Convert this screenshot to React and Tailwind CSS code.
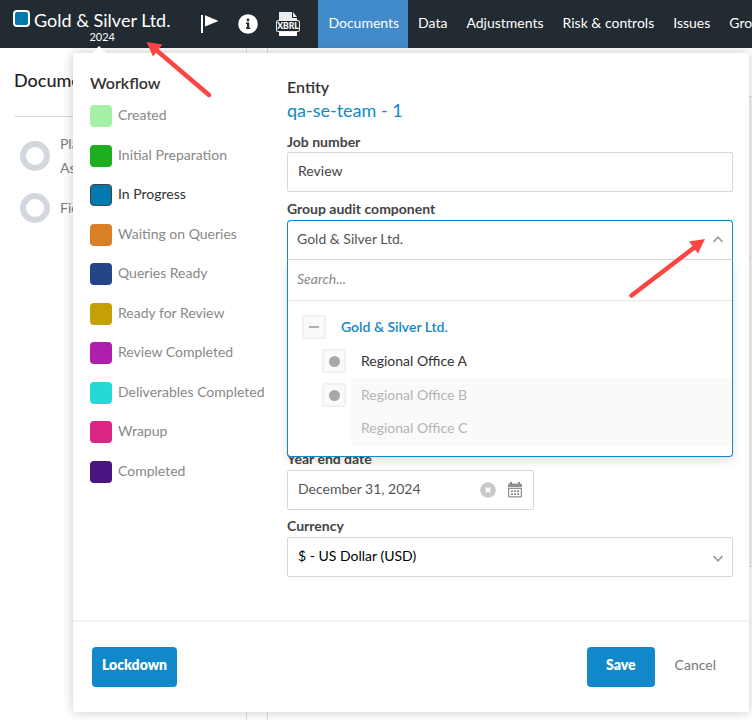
import React, { useState } from 'react';

const tabs = ['Documents', 'Data', 'Adjustments', 'Risk & controls', 'Issues', 'Group audit'];

const stages = [
  { name: 'Created', color: 'bg-[#a6f0a6]' },
  { name: 'Initial Preparation', color: 'bg-[#1fae1f]' },
  { name: 'In Progress', color: 'bg-[#0079ae]' },
  { name: 'Waiting on Queries', color: 'bg-[#d98026]' },
  { name: 'Queries Ready', color: 'bg-[#244587]' },
  { name: 'Ready for Review', color: 'bg-[#c4a006]' },
  { name: 'Review Completed', color: 'bg-[#ae1fae]' },
  { name: 'Deliverables Completed', color: 'bg-[#26d9d9]' },
  { name: 'Wrapup', color: 'bg-[#d92680]' },
  { name: 'Completed', color: 'bg-[#4b1580]' },
];

const FlagIcon = () => (
  <svg width="20" height="20" viewBox="0 0 20 20" fill="#fff" aria-hidden="true">
    <rect x="1" y="1" width="2" height="18" />
    <path d="M5 1.2 18.5 7 5 12.6z" />
  </svg>
);

const InfoIcon = () => (
  <svg width="20" height="20" viewBox="0 0 20 20" aria-hidden="true">
    <circle cx="10" cy="10" r="9.8" fill="#fff" />
    <circle cx="10" cy="6" r="1.4" fill="#222a32" />
    <path d="M8 8.6h3.2v5h1v1.4H8v-1.4h1V10H8z" fill="#222a32" />
  </svg>
);

const XbrlIcon = () => (
  <svg width="24" height="24" viewBox="0 0 24 24" aria-hidden="true">
    <path d="M3 0h13v6h5v2H3z" fill="#e9ebec" />
    <path d="M17 0l4 5h-4z" fill="#e9ebec" />
    <rect x="0" y="8" width="24" height="12" rx="2.5" fill="#e9ebec" />
    <rect x="1" y="9" width="22" height="10" rx="1.5" fill="#222a32" />
    <rect x="3" y="20" width="18" height="4" fill="#fff" />
    <text x="12" y="17" textAnchor="middle" fontSize="8.6" fontWeight="900" fill="#fff" fontFamily="Lato, sans-serif">
      XBRL
    </text>
  </svg>
);

const Chevron = ({ up = false }) => (
  <svg width="10" height="7" viewBox="0 0 10 7" fill="none" stroke="#999" strokeWidth="1.6" aria-hidden="true">
    <path d={up ? 'M0.5 6 5 1.2 9.5 6' : 'M0.5 1 5 5.8 9.5 1'} />
  </svg>
);

const ClearIcon = () => (
  <svg width="16" height="16" viewBox="0 0 16 16" aria-hidden="true">
    <circle cx="8" cy="8" r="7.8" fill="#c9c9c9" />
    <path d="M5.6 5.6l4.8 4.8M10.4 5.6l-4.8 4.8" stroke="#fff" strokeWidth="1.8" />
  </svg>
);

const CalendarIcon = () => (
  <svg width="14" height="16" viewBox="0 0 14 16" fill="#8f8f8f" aria-hidden="true">
    <path d="M0 3q0-1.500 1.500-1.500H2V0h2v1.500h6V0h2v1.500h.5Q14 1.500 14 3v2H0z" />
    <path d="M0 5.800h14V14q0 1.500-1.500 1.500h-11Q0 15.500 0 14zM1.200 7v7.200h11.600V7z" fillRule="evenodd" />
    <path d="M3 8.200h2v1.700H3zM6 8.200h2v1.700H6zM9 8.200h2v1.700H9zM3 11.200h2v1.700H3zM6 11.200h2v1.700H6zM9 11.200h2v1.700H9z" />
  </svg>
);

const toggleBox = 'flex size-6 shrink-0 items-center justify-center rounded-xs border-2 border-[#f0f1f2] bg-[#fafafa]';

const Header = () => (
  <header className="flex h-12 shrink-0 overflow-hidden bg-[#222a32] text-white">
    <button className="flex items-start gap-1 pt-[10px] pl-[13px]">
      <span className="size-[17px] rounded-sm border-2 border-white bg-[#0079ae]" />
      <span className="flex flex-col items-center">
        <span className="text-lg leading-[20px] whitespace-nowrap">Gold &amp; Silver Ltd.</span>
        <span className="text-[11px] leading-[14px]">2024</span>
      </span>
    </button>
    <div className="flex items-center pr-[18px] pl-[30px]">
      <button aria-label="Flag"><FlagIcon /></button>
      <button aria-label="Information" className="ml-[18px]"><InfoIcon /></button>
      <button aria-label="XBRL" className="ml-[18px]"><XbrlIcon /></button>
    </div>
    <nav className="flex">
      {tabs.map((tab, i) => (
        <a
          key={tab}
          href="#"
          className={`flex items-center pr-[9px] pb-[2px] pl-[10px] text-sm whitespace-nowrap ${i === 0 ? 'bg-[#428bca]' : ''}`}
        >
          {tab}
        </a>
      ))}
    </nav>
  </header>
);

const Background = () => (
  <div className="flex flex-1">
    <aside className="w-[247px] shrink-0 border-r border-[#ddd] pl-[14px]">
      <h2 className="border-b border-[#ddd] pt-[21px] pb-[25px] text-lg leading-[22px] font-medium text-[#222]">
        Documents
      </h2>
      <ul className="flex flex-col gap-[13px] pt-[15px] pl-[6px] text-sm text-[#777f88]">
        <li className="flex items-center gap-[10px]">
          <span className="size-[30px] shrink-0 rounded-full border-6 border-[#d3d8de]" />
          <span className="w-[100px] leading-6">Planning &amp; Assessment</span>
        </li>
        <li className="flex items-center gap-[10px]">
          <span className="size-[30px] shrink-0 rounded-full border-6 border-[#d3d8de]" />
          <span>Fieldwork</span>
        </li>
      </ul>
    </aside>
    <main className="ml-[20px] flex-1 border-l border-[#ddd]">
      <div className="h-[49px] border-b border-[#ddd]" />
      <div className="h-[161px] border-b border-[#ddd] bg-[#f5f5f5]" />
      <div className="h-[309px] border-b border-[#ddd] bg-[#f5f5f5]" />
    </main>
  </div>
);

const Workflow = ({ current, onChange }) => (
  <section className="w-[197px] shrink-0 pt-[20px]">
    <h3 className="text-base leading-[20px] font-semibold text-[#333]">Workflow</h3>
    <ul className="mt-[12px] flex h-[378px] flex-col justify-between">
      {stages.map(({ name, color }) => (
        <li key={name}>
          <button
            onClick={() => onChange(name)}
            className={`flex h-[22px] items-center gap-[6px] text-sm whitespace-nowrap ${
              name === current ? 'text-[#333]' : 'text-[#888]'
            }`}
          >
            <span className={`size-[22px] rounded-sm ${color} ${name === current ? 'border border-[#444]' : ''}`} />
            <span className="pb-[2px]">{name}</span>
          </button>
        </li>
      ))}
    </ul>
  </section>
);

const ComponentTree = () => (
  <div className="relative z-10 -mb-[7px] rounded-b-sm border border-t-0 border-[#1188c9] bg-white text-sm shadow-[0_4px_10px_rgba(0,0,0,0.12)]">
    <input
      type="text"
      aria-label="Search components"
      placeholder="Search..."
      className="block h-[41px] w-full border-b border-[#e4e6e8] px-[9px] pb-1 outline-none placeholder:text-[#888] placeholder:italic"
    />
    <ul role="tree" className="flex flex-col pt-[9px] pb-[10px] pl-[14px]">
      <li role="treeitem" className="flex h-[34px] items-center">
        <button aria-label="Collapse" className={toggleBox}>
          <span className="h-[2px] w-[10px] bg-[#b0b0b0]" />
        </button>
        <span className="pb-px pl-[15px] font-semibold text-[#1188c9]">Gold &amp; Silver Ltd.</span>
      </li>
      <li role="treeitem" className="flex h-[34px] items-center pl-[20px]">
        <button aria-label="Select Regional Office A" className={toggleBox}>
          <span className="size-[11px] rounded-full bg-[#a8a8a8]" />
        </button>
        <span className="pl-[15px] text-[#333]">Regional Office A</span>
      </li>
      <li role="treeitem" className="flex h-[34px] items-center pl-[20px]">
        <button aria-label="Select Regional Office B" className={toggleBox}>
          <span className="size-[11px] rounded-full bg-[#a8a8a8]" />
        </button>
        <span className="ml-[5px] flex flex-1 items-center self-stretch bg-[#fafafa] pb-px pl-[10px] text-[#b5b5b5]">
          Regional Office B
        </span>
      </li>
      <li role="treeitem" className="flex h-[34px] items-center pl-[49px]">
        <span className="flex flex-1 items-center self-stretch bg-[#fafafa] pb-[2px] pl-[10px] text-[#b5b5b5]">
          Regional Office C
        </span>
      </li>
    </ul>
  </div>
);

const label = 'block text-sm leading-[18px] font-bold text-[#444]';
const field = 'h-10 rounded-xs border border-[#d3d8de] bg-white text-sm';

const EntityForm = () => (
  <section className="min-w-0 flex-1 pt-[24px]">
    <h3 className="text-base leading-[20px] font-semibold text-[#333]">Entity</h3>
    <a href="#" className="block text-lg leading-[26px] text-[#1188c9]">qa-se-team - 1</a>

    <label htmlFor="job" className={`${label} mt-[10px]`}>Job number</label>
    <input id="job" type="text" defaultValue="Review" className={`${field} mt-[1px] block w-full px-[10px] pb-1 text-[#444]`} />

    <label htmlFor="component" className={`${label} mt-[8px]`}>Group audit component</label>
    <button
      id="component"
      aria-expanded="true"
      className="mt-[2px] flex h-10 w-full items-center justify-between rounded-t-sm border border-[#1188c9] border-b-[#dadcde] px-[9px] pb-[2px] text-sm text-[#555]"
    >
      Gold &amp; Silver Ltd.
      <Chevron up />
    </button>
    <ComponentTree />

    <label htmlFor="yearEnd" className={label}>Year end date</label>
    <div className={`${field} mt-[2px] flex w-[247px] items-center pr-[11px] pl-[10px]`}>
      <input id="yearEnd" type="text" defaultValue="December 31, 2024" className="min-w-0 flex-1 pb-[2px] text-[#555] outline-none" />
      <button aria-label="Clear date"><ClearIcon /></button>
      <button aria-label="Open calendar" className="ml-[12px]"><CalendarIcon /></button>
    </div>

    <label htmlFor="currency" className={`${label} mt-[7px]`}>Currency</label>
    <div className="relative mt-[2px]">
      <select id="currency" className={`${field} block w-full appearance-none px-[10px] pb-[2px] text-black`}>
        <option>$ - US Dollar (USD)</option>
      </select>
      <span className="pointer-events-none absolute top-[18px] right-[10px]"><Chevron /></span>
    </div>
  </section>
);

const App = () => {
  const [stage, setStage] = useState('In Progress');

  return (
    <div className="relative flex min-h-screen flex-col overflow-hidden bg-white font-[Lato,sans-serif]">
      <Header />
      <Background />

      {/* Engagement properties popover */}
      <div className="absolute top-[53px] right-[3px] left-[73px] rounded-xs bg-white shadow-[0_0_12px_rgba(0,0,0,0.22)]">
        <span className="absolute -top-[7px] left-[19px] border-x-7 border-b-7 border-x-transparent border-b-white" />
        <div className="flex pr-[16px] pb-[43px] pl-[17px]">
          <Workflow current={stage} onChange={setStage} />
          <EntityForm />
        </div>
        <footer className="flex items-center border-t-2 border-[#f2f3f4] pt-[25px] pr-[33px] pb-[25px] pl-[19px] text-sm">
          <button className="h-10 rounded-sm bg-[#1188c9] px-[10px] pb-1 font-extrabold text-white">Lockdown</button>
          <button className="ml-auto h-10 rounded-sm bg-[#1188c9] px-[19px] pb-1 font-extrabold text-white">Save</button>
          <button className="ml-[20px] pb-1 text-[#777]">Cancel</button>
        </footer>
      </div>

      {/* Callout arrows */}
      <svg className="pointer-events-none absolute top-[40px] left-[145px] z-20" width="70" height="60" viewBox="0 0 70 60" aria-hidden="true">
        <path d="M10 9 64 55" stroke="#fb4444" strokeWidth="4.5" strokeLinecap="round" />
        <path d="M1.5 2 17.5 4.5 8 16.5z" fill="#fb4444" />
      </svg>
      <svg className="pointer-events-none absolute top-[236px] right-[45px] z-20" width="80" height="64" viewBox="0 0 80 64" aria-hidden="true">
        <path d="M4.5 59.5 68 11" stroke="#fb4444" strokeWidth="4.5" strokeLinecap="round" />
        <path d="M78 3 62 5.5 71 17.5z" fill="#fb4444" />
      </svg>
    </div>
  );
};

export default App;
